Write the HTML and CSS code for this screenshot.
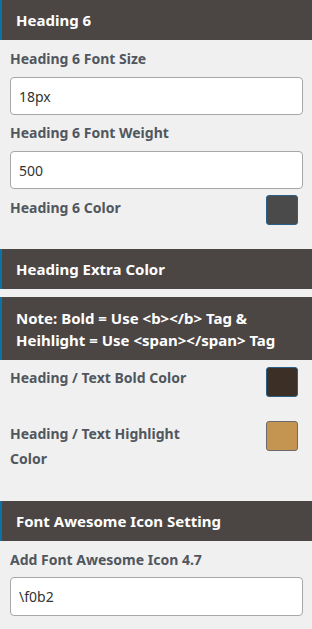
FILE: index.html
```html
<!DOCTYPE html>
<html lang="en">
<head>
    <meta charset="UTF-8">
    <meta name="viewport" content="width=device-width, initial-scale=1.0">
    <title>Heading Settings</title>
    <link rel="stylesheet" href="styles.css">
</head>
<body>

    <div class="section-head">Heading 6</div>
    <div class="field">
        <label for="h6Size">Heading 6 Font Size</label>
        <input type="text" id="h6Size" value="18px">

        <label for="h6Weight">Heading 6 Font Weight</label>
        <input type="text" id="h6Weight" value="500">

        <div class="color-row first">
            <span class="color-label">Heading 6 Color</span>
            <span class="swatch swatch-dark"></span>
        </div>
    </div>

    <div class="section-head gap-top">Heading Extra Color</div>
    <div class="section-head note">Note: Bold = Use &lt;b&gt;&lt;/b&gt; Tag &amp; Heihlight = Use &lt;span&gt;&lt;/span&gt; Tag</div>

    <div class="field">
        <div class="color-row tight">
            <span class="color-label">Heading / Text Bold Color</span>
            <span class="swatch swatch-bold"></span>
        </div>
        <div class="color-row spaced">
            <span class="color-label">Heading / Text Highlight Color</span>
            <span class="swatch swatch-light"></span>
        </div>
    </div>

    <div class="section-head gap-big">Font Awesome Icon Setting</div>
    <div class="field">
        <label for="faIcon">Add Font Awesome Icon 4.7</label>
        <input type="text" id="faIcon" class="last" value="\f0b2">
    </div>

</body>
</html>
```
FILE: styles.css
```css
body {
    font-family: "Noto Sans", "Open Sans", sans-serif;
    margin: 0;
    background-color: #f0f0f0;
    width: 312px;
}
.section-head {
    background-color: #4b4644;
    border-left: 2px solid #0a73aa;
    color: #fff;
    font-size: 15px;
    font-weight: 700;
    line-height: 22px;
    padding: 9px 14px 9px 14px;
}
.gap-top {
    margin-top: 24px;
}
.note {
    margin-top: 8px;
    line-height: 22px;
    padding: 10px 14px 9px 14px;
}
.gap-big {
    margin-top: 30px;
}
.field {
    padding: 0 9px 0 10px;
}
label {
    display: block;
    color: #50575e;
    font-size: 14px;
    font-weight: 700;
    line-height: 20px;
    margin-top: 9px;
}
input {
    display: block;
    box-sizing: border-box;
    width: 100%;
    height: 38px;
    margin-top: 8px;
    padding: 0 8px;
    border: 1px solid #a7a7a7;
    border-radius: 4px;
    background: #fff;
    color: #333;
    font-family: inherit;
    font-size: 14px;
}
input.last {
    height: 39px;
    margin-top: 7px;
}
label + input + label {
    margin-top: 8px;
}
.color-row {
    display: flex;
    justify-content: space-between;
    align-items: flex-start;
    padding-right: 5px;
}
.color-row.first {
    margin-top: 6px;
}
.color-row.tight {
    margin-top: 7px;
}
.color-row.spaced {
    margin-top: 24px;
}
.color-label {
    color: #50575e;
    font-size: 14px;
    font-weight: 700;
    line-height: 25px;
    max-width: 185px;
}
.tight .color-label {
    line-height: 22px;
}
.swatch {
    flex: none;
    width: 30px;
    height: 28px;
    border: 1px solid #2b5f86;
    border-radius: 3px;
}
.swatch-dark {
    background-color: #4a4a4a;
}
.swatch-bold {
    background-color: #3c3026;
}
.swatch-light {
    background-color: #c49451;
    border-color: #6a6a6a;
}
```
